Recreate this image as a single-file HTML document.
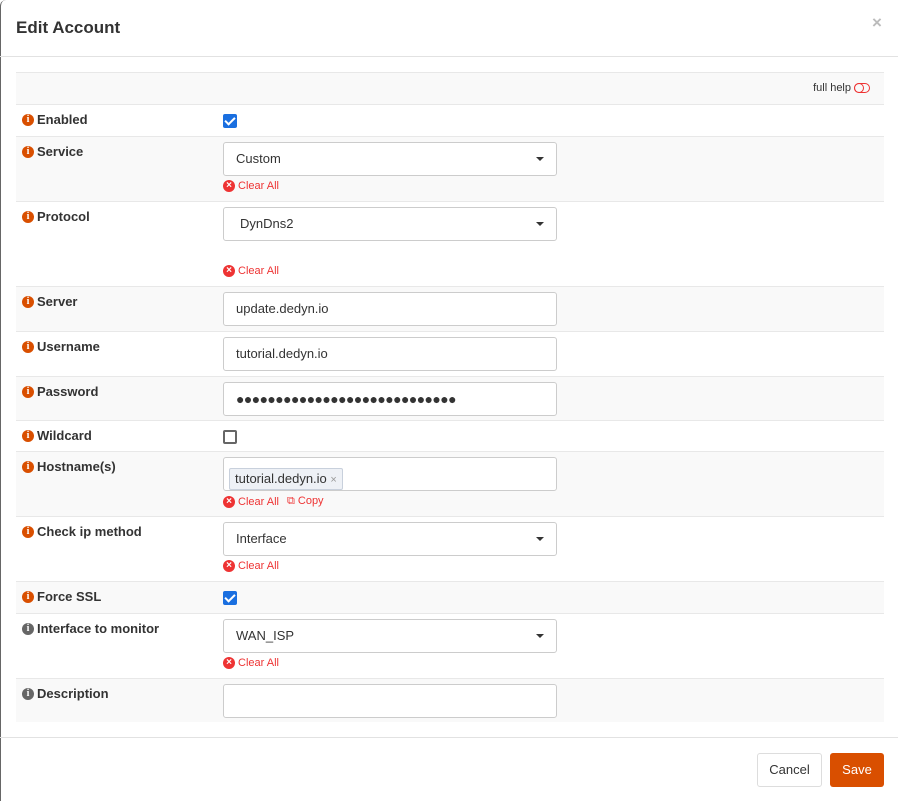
<!DOCTYPE html>
<html><head><style>
*{box-sizing:border-box;margin:0;padding:0}
body{width:898px;height:801px;background:#fff;font-family:"Liberation Sans",sans-serif;font-size:13px;color:#333;position:relative;overflow:hidden}
.edge{position:absolute;left:0;top:0;width:10px;height:801px;border-left:1px solid #666;border-top:1px solid #666;border-top-left-radius:6px;border-top:none}
.title{position:absolute;left:16px;top:18px;font-size:17px;font-weight:bold;color:#333}
.close{position:absolute;left:872px;top:13px;font-size:17px;color:#bbb;font-weight:bold}
.hr1{position:absolute;left:0;right:0;top:56px;border-top:1px solid #e2e2e2}
.hr2{position:absolute;left:0;right:0;top:737px;border-top:1px solid #e2e2e2}
.row{position:absolute;left:16px;width:868px;border-top:1px solid #e8e8e8}
.g{background:#f9f9f9}
.lbl{position:absolute;left:6px;top:7px;font-weight:bold;font-size:13px;color:#333;display:flex;align-items:center}
.ic{width:12px;height:12px;border-radius:50%;background:#d94f00;color:#fff;font-size:10px;font-weight:bold;text-align:center;line-height:12px;margin-right:3px;font-family:"Liberation Serif",serif}
.ic.gr{background:#666}
.inp{position:absolute;left:207px;width:334px;height:34px;border:1px solid #ccc;border-radius:3px;background:#fff;padding:0 12px;line-height:32px;font-size:13px;color:#333}
.sel::after{content:"";position:absolute;right:12px;top:14px;border-left:4px solid transparent;border-right:4px solid transparent;border-top:4px solid #333}
.cb{position:absolute;left:207px;width:14px;height:14px;border-radius:2px}
.cb.on{background:#1a6fe0}
.cb.on::after{content:"";position:absolute;left:4px;top:1px;width:4px;height:8px;border:solid #fff;border-width:0 2px 2px 0;transform:rotate(45deg)}
.cb.off{border:2px solid #666;background:#fff}
.clr{position:absolute;left:207px;font-size:11px;color:#e33;display:flex;align-items:center}
.x{width:12px;height:12px;border-radius:50%;background:#e33;color:#fff;font-size:10px;line-height:12px;text-align:center;margin-right:3px;font-weight:bold}
.btn{position:absolute;top:753px;height:34px;border-radius:3px;line-height:34px;text-align:center;font-size:13px}
</style></head><body>
<div class="edge"></div>
<div class="title">Edit Account</div><div class="close">×</div>
<div class="hr1"></div>

<div class="row g" style="top:72px;height:32px"><div style="position:absolute;right:14px;top:9px;font-size:11px;display:flex;align-items:center">full help <span style="display:inline-block;width:16px;height:10px;border:1.3px solid #e33;border-radius:5px;margin-left:3px;position:relative"><span style="position:absolute;left:-1px;top:-1px;width:10px;height:10px;border-radius:50%;border:1.3px solid #e33;"></span></span></div></div>

<div class="row" style="top:104px;height:32px"><div class="lbl"><span class="ic">i</span>Enabled</div><div class="cb on" style="top:9px"></div></div>

<div class="row g" style="top:136px;height:65px"><div class="lbl"><span class="ic">i</span>Service</div><div class="inp sel" style="top:5px">Custom</div><div class="clr" style="top:43px"><span class="x">×</span>Clear All</div></div>

<div class="row" style="top:201px;height:85px"><div class="lbl"><span class="ic">i</span>Protocol</div><div class="inp sel" style="top:5px;padding-left:16px">DynDns2</div><div class="clr" style="top:63px"><span class="x">×</span>Clear All</div></div>

<div class="row g" style="top:286px;height:45px"><div class="lbl"><span class="ic">i</span>Server</div><div class="inp" style="top:5px">update.dedyn.io</div></div>

<div class="row" style="top:331px;height:45px"><div class="lbl"><span class="ic">i</span>Username</div><div class="inp" style="top:5px">tutorial.dedyn.io</div></div>

<div class="row g" style="top:376px;height:44px"><div class="lbl"><span class="ic">i</span>Password</div><div class="inp" style="top:5px;font-size:14px;letter-spacing:-0.6px">●●●●●●●●●●●●●●●●●●●●●●●●●●●●</div></div>

<div class="row" style="top:420px;height:31px"><div class="lbl"><span class="ic">i</span>Wildcard</div><div class="cb off" style="top:9px"></div></div>

<div class="row g" style="top:451px;height:65px"><div class="lbl"><span class="ic">i</span>Hostname(s)</div><div class="inp" style="top:5px;padding:5px"><span style="display:inline-block;height:22px;line-height:20px;border:1px solid #c8d0dc;background:#eef1f6;border-radius:2px;padding:0 5px">tutorial.dedyn.io <span style="color:#999;font-size:11px">×</span></span></div><div class="clr" style="top:43px"><span class="x">×</span>Clear All<span style="margin-left:8px">⧉ Copy</span></div></div>

<div class="row" style="top:516px;height:65px"><div class="lbl"><span class="ic">i</span>Check ip method</div><div class="inp sel" style="top:5px">Interface</div><div class="clr" style="top:43px"><span class="x">×</span>Clear All</div></div>

<div class="row g" style="top:581px;height:32px"><div class="lbl"><span class="ic">i</span>Force SSL</div><div class="cb on" style="top:9px"></div></div>

<div class="row" style="top:613px;height:65px"><div class="lbl"><span class="ic gr">i</span>Interface to monitor</div><div class="inp sel" style="top:5px">WAN_ISP</div><div class="clr" style="top:43px"><span class="x">×</span>Clear All</div></div>

<div class="row g" style="top:678px;height:44px"><div class="lbl"><span class="ic gr">i</span>Description</div><div class="inp" style="top:5px"></div></div>

<div class="hr2"></div>
<div class="btn" style="left:757px;width:65px;border:1px solid #ddd;color:#333;line-height:32px">Cancel</div>
<div class="btn" style="left:830px;width:54px;background:#d94f00;color:#fff">Save</div>
</body></html>
